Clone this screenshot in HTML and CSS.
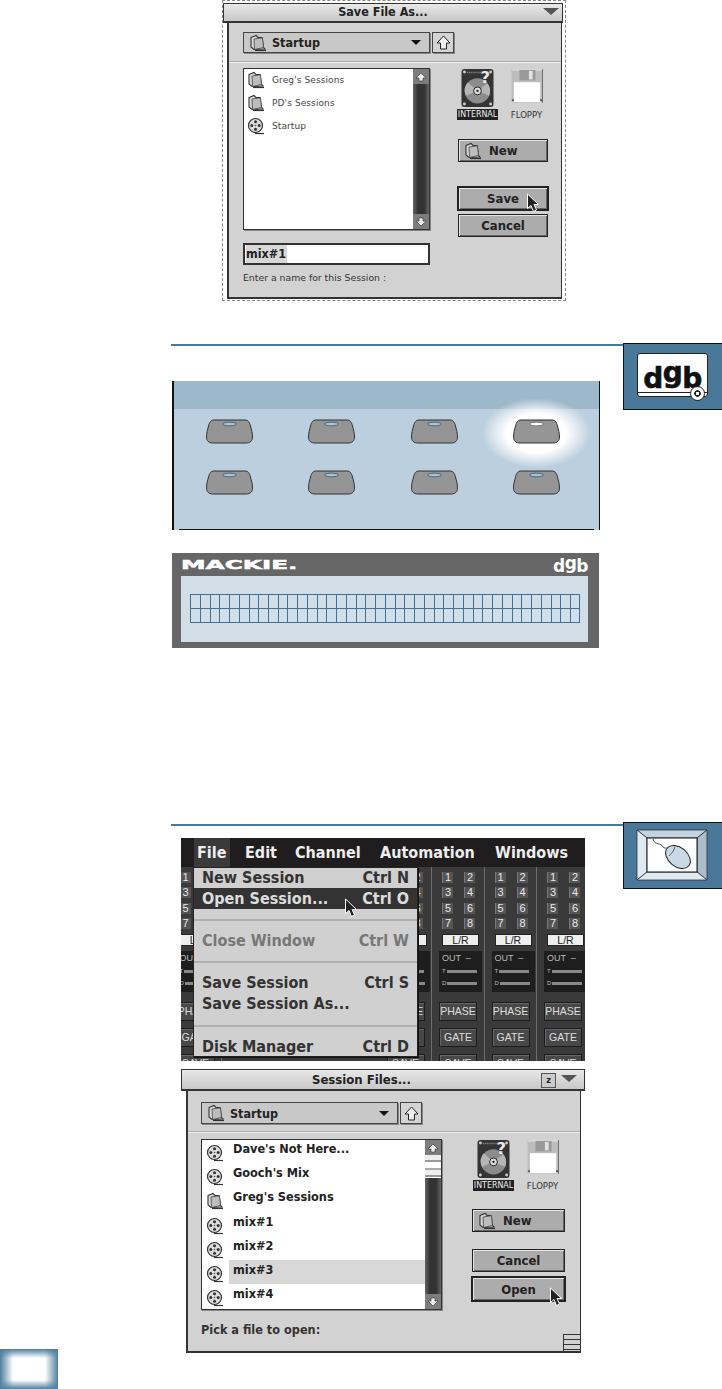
FILE: index.html
```html
<!DOCTYPE html>
<html lang="en">
<head>
  <meta charset="UTF-8">
  <title>Session Files</title>
  <link rel="stylesheet" href="styles.css">
</head>
<body>

  <svg class="defs" width="0" height="0">
    <symbol id="folder" viewBox="0 0 18 18">
      <path d="M2 3.5 L7 1.5 L9 3.500 L13 3.500 L14.500 13.500 L16 15 L5 15.500 L2 13 Z" fill="#d8d8d8" stroke="#333" stroke-width="1.1"/>
      <path d="M5 5 L13.500 3.800 L14.500 13.500 L5.500 15.500 Z" fill="#bdbdbd" stroke="#444" stroke-width=".8"/>
      <path d="M6 16.500 H17" stroke="#333" stroke-width="1.2"/>
    </symbol>
    <symbol id="reel" viewBox="0 0 18 18">
      <circle cx="8.500" cy="8.500" r="7" fill="#dcdcdc" stroke="#333" stroke-width="1.2"/>
      <circle cx="8.500" cy="4.800" r="1.500" fill="#333"/>
      <circle cx="8.500" cy="12.200" r="1.500" fill="#333"/>
      <circle cx="4.800" cy="8.500" r="1.500" fill="#333"/>
      <circle cx="12.200" cy="8.500" r="1.500" fill="#333"/>
      <circle cx="8.500" cy="8.500" r=".8" fill="#555"/>
      <path d="M8 16.500 H17" stroke="#333" stroke-width="1.2"/>
    </symbol>
    <symbol id="hd" viewBox="0 0 34 40">
      <rect x=".5" y=".5" width="33" height="39" rx="3" fill="#343434"/>
      <path d="M6 4 H24" stroke="#999" stroke-width="1.500" stroke-dasharray="1 1"/>
      <circle cx="17" cy="23" r="13" fill="#8c8c8c"/>
      <path d="M17 23 L7 14 A13 13 0 0 0 5 28 Z M17 23 L29 28 A13 13 0 0 0 27 15 Z" fill="#b5b5b5"/>
      <circle cx="17" cy="23" r="4" fill="#ddd" stroke="#222"/>
      <circle cx="17" cy="23" r="1.200" fill="#222"/>
      <text x="20" y="15" font-family="DejaVu Sans" font-weight="700" font-size="17" fill="#e8e8e8">?</text>
      <circle cx="3.500" cy="36.500" r="1.500" fill="#ccc"/>
      <circle cx="30.500" cy="36.500" r="1.500" fill="#ccc"/>
      <circle cx="3.500" cy="3.500" r="1.500" fill="#ccc"/>
      <circle cx="30.500" cy="3.500" r="1.500" fill="#ccc"/>
    </symbol>
    <symbol id="floppy" viewBox="0 0 34 36">
      <path d="M.5 .5 H33.500 V35.500 H.5 Z" fill="#bdbdbd"/>
      <path d="M1 1 H33" stroke="#e6e6e6"/>
      <rect x="9" y="1" width="17" height="11" fill="#9a9a9a"/>
      <rect x="19" y="2" width="4" height="9" fill="#e2e2e2"/>
      <rect x="3" y="14" width="28" height="21" fill="#fff"/>
      <path d="M33.500 0 V36" stroke="#666"/>
      <rect x="1" y="32" width="2" height="2" fill="#555"/>
      <rect x="31" y="32" width="2" height="2" fill="#555"/>
    </symbol>
    <symbol id="arrow" viewBox="0 0 14 20">
      <path d="M1.500 1 V15.500 L5 12.500 L7.500 18.500 L10.500 17 L8 11.500 H12.500 Z" fill="#222" stroke="#fff"/>
    </symbol>
    <symbol id="pad" viewBox="0 0 47 25">
      <path d="M8 1 H39 C42 1 43.500 3 44.500 7 C45.500 11 46.500 14 46.500 18 C46.500 22 44 24 40 24 H7 C3 24 .5 22 .5 18 C.5 14 1.500 11 2.500 7 C3.500 3 5 1 8 1 Z" fill="#959595" stroke="#333"/>
      <ellipse cx="23.500" cy="5" rx="7" ry="1.800" fill="#a9c3d6" stroke="#3a566b" stroke-width=".8"/>
    </symbol>
    <symbol id="pad-on" viewBox="0 0 47 25">
      <path d="M8 1 H39 C42 1 43.500 3 44.500 7 C45.500 11 46.500 14 46.500 18 C46.500 22 44 24 40 24 H7 C3 24 .5 22 .5 18 C.5 14 1.500 11 2.500 7 C3.500 3 5 1 8 1 Z" fill="#959595" stroke="#333"/>
      <ellipse cx="23.500" cy="5" rx="7" ry="1.800" fill="#fff" stroke="#444" stroke-width=".6"/>
    </symbol>
    <symbol id="up" viewBox="0 0 12 10">
      <path d="M6 1 L11 6 H8 V9 H4 V6 H1 Z" fill="#eee" stroke="#333" stroke-width=".6"/>
    </symbol>
  </svg>

  <div class="page">
    <div class="gutter"><div class="corner"></div></div>

    <div class="content">

      <div class="win win-save">
        <div class="win-title">Save File As...<span class="tri-wide"></span></div>
        <div class="win-body">
          <div class="pop-row">
            <div class="popup"><svg class="ico"><use href="#folder"/></svg><span class="popup-text">Startup</span><span class="tri"></span></div>
            <div class="upbtn"><svg width="15" height="17" viewBox="0 0 15 17"><path d="M7.500 2 L14 9 H10.500 V15 H4.500 V9 H1 Z" fill="#eee" stroke="#222"/></svg></div>
          </div>
          <div class="sep"></div>
          <div class="cols">
            <div class="main">
              <div class="list">
                <div class="rows">
                  <div class="row"><svg class="ico"><use href="#folder"/></svg>Greg's Sessions</div>
                  <div class="row"><svg class="ico"><use href="#folder"/></svg>PD's Sessions</div>
                  <div class="row"><svg class="ico"><use href="#reel"/></svg>Startup</div>
                </div>
                <div class="scroll">
                  <div class="scroll-btn"><svg width="12" height="10"><use href="#up"/></svg></div>
                  <div class="scroll-track"></div>
                  <div class="scroll-btn down"><svg width="12" height="10"><use href="#up"/></svg></div>
                </div>
              </div>
              <div class="namebox"><span class="name-sel">mix#1</span></div>
              <div class="hint">Enter a name for this Session :</div>
            </div>
            <div class="side">
              <div class="drives">
                <div class="drive"><svg class="drive-hd"><use href="#hd"/></svg><span class="drive-label on">INTERNAL</span></div>
                <div class="drive"><svg class="drive-fd"><use href="#floppy"/></svg><span class="drive-label">FLOPPY</span></div>
              </div>
              <div class="btn btn-new"><svg class="ico"><use href="#folder"/></svg>New</div>
              <div class="btn btn-def btn-first">Save<svg class="cursor"><use href="#arrow"/></svg></div>
              <div class="btn">Cancel</div>
            </div>
          </div>
        </div>
      </div>

      <div class="section section-pads">
        <div class="section-main">
          <div class="rule"></div>
          <div class="panel">
            <div class="panel-band"></div>
            <div class="pads">
              <svg class="pad"><use href="#pad"/></svg><svg class="pad"><use href="#pad"/></svg><svg class="pad"><use href="#pad"/></svg>
              <div class="pad-lit"><svg class="pad"><use href="#pad-on"/></svg></div>
              <svg class="pad"><use href="#pad"/></svg><svg class="pad"><use href="#pad"/></svg><svg class="pad"><use href="#pad"/></svg><svg class="pad"><use href="#pad"/></svg>
            </div>
            <div class="panel-foot"></div>
          </div>
          <div class="display">
            <div class="display-head"><span class="mackie">MACKIE.</span><span class="dgb dgb-small">d<span class="dgb-g">g</span>b</span></div>
            <div class="display-lcd"><div class="lcd-grid"></div></div>
          </div>
        </div>
        <div class="badge">
          <div class="card"><span class="dgb card-logo">d<span class="dgb-g">g</span>b</span><span class="card-stripe"></span><span class="card-disc"></span></div>
        </div>
      </div>

      <div class="section section-menu">
        <div class="section-main">
          <div class="rule"></div>
          <div class="shot">
            <div class="menubar">
              <span class="menubar-item on">File</span>
              <span class="menubar-item">Edit</span>
              <span class="menubar-item">Channel</span>
              <span class="menubar-item">Automation</span>
              <span class="menubar-item">Windows</span>
            </div>
            <div class="strips">
              <div class="strip">
                <div class="keys"><b>1</b><b>2</b><b>3</b><b>4</b><b>5</b><b>6</b><b>7</b><b>8</b></div>
                <div class="lr">L/R</div>
                <div class="out"><span>OUT &nbsp;&ndash;</span><i>T</i><i>D</i></div>
                <div class="chip chip-first">PHASE</div><div class="chip">GATE</div><div class="chip">SAVE</div>
              </div>
              <div class="strip-gap"></div>
              <div class="strip">
                <div class="keys"><b>1</b><b>2</b><b>3</b><b>4</b><b>5</b><b>6</b><b>7</b><b>8</b></div>
                <div class="lr">L/R</div>
                <div class="out"><span>OUT &nbsp;&ndash;</span><i>T</i><i>D</i></div>
                <div class="chip chip-first">PHASE</div><div class="chip">GATE</div><div class="chip">SAVE</div>
              </div>
              <div class="strip">
                <div class="keys"><b>1</b><b>2</b><b>3</b><b>4</b><b>5</b><b>6</b><b>7</b><b>8</b></div>
                <div class="lr">L/R</div>
                <div class="out"><span>OUT &nbsp;&ndash;</span><i>T</i><i>D</i></div>
                <div class="chip chip-first">PHASE</div><div class="chip">GATE</div><div class="chip">SAVE</div>
              </div>
              <div class="strip">
                <div class="keys"><b>1</b><b>2</b><b>3</b><b>4</b><b>5</b><b>6</b><b>7</b><b>8</b></div>
                <div class="lr">L/R</div>
                <div class="out"><span>OUT &nbsp;&ndash;</span><i>T</i><i>D</i></div>
                <div class="chip chip-first">PHASE</div><div class="chip">GATE</div><div class="chip">SAVE</div>
              </div>
              <div class="strip">
                <div class="keys"><b>1</b><b>2</b><b>3</b><b>4</b><b>5</b><b>6</b><b>7</b><b>8</b></div>
                <div class="lr">L/R</div>
                <div class="out"><span>OUT &nbsp;&ndash;</span><i>T</i><i>D</i></div>
                <div class="chip chip-first">PHASE</div><div class="chip">GATE</div><div class="chip">SAVE</div>
              </div>
            </div>
            <div class="menu">
              <div class="menu-item menu-first"><span>New Session</span><span>Ctrl N</span></div>
              <div class="menu-item on"><span>Open Session...</span><span>Ctrl O</span><svg class="cursor"><use href="#arrow"/></svg></div>
              <div class="menu-gap"></div>
              <div class="menu-item off"><span>Close Window</span><span>Ctrl W</span></div>
              <div class="menu-gap"></div>
              <div class="menu-item"><span>Save Session</span><span>Ctrl S</span></div>
              <div class="menu-item"><span>Save Session As...</span></div>
              <div class="menu-gap menu-gap-3"></div>
              <div class="menu-item"><span>Disk Manager</span><span>Ctrl D</span></div>
            </div>
          </div>

          <div class="win win-open">
            <div class="win-title">Session Files...<span class="zoombox">z</span><span class="tri-wide"></span></div>
            <div class="win-body">
              <div class="pop-row">
                <div class="popup"><svg class="ico"><use href="#folder"/></svg><span class="popup-text">Startup</span><span class="tri"></span></div>
                <div class="upbtn"><svg width="15" height="17" viewBox="0 0 15 17"><path d="M7.500 2 L14 9 H10.500 V15 H4.500 V9 H1 Z" fill="#eee" stroke="#222"/></svg></div>
              </div>
              <div class="sep"></div>
              <div class="cols">
                <div class="main">
                  <div class="list">
                    <div class="rows">
                      <div class="row"><svg class="ico"><use href="#reel"/></svg>Dave's Not Here...</div>
                      <div class="row"><svg class="ico"><use href="#reel"/></svg>Gooch's Mix</div>
                      <div class="row"><svg class="ico"><use href="#folder"/></svg>Greg's Sessions</div>
                      <div class="row"><svg class="ico"><use href="#reel"/></svg>mix#1</div>
                      <div class="row"><svg class="ico"><use href="#reel"/></svg>mix#2</div>
                      <div class="row"><svg class="ico"><use href="#reel"/></svg><span class="row-sel">mix#3</span></div>
                      <div class="row"><svg class="ico"><use href="#reel"/></svg>mix#4</div>
                    </div>
                    <div class="scroll">
                      <div class="scroll-btn"><svg width="12" height="10"><use href="#up"/></svg></div>
                      <div class="scroll-thumb"></div>
                      <div class="scroll-track"></div>
                      <div class="scroll-btn down"><svg width="12" height="10"><use href="#up"/></svg></div>
                    </div>
                  </div>
                  <div class="hint">Pick a file to open:</div>
                </div>
                <div class="side">
                  <div class="drives">
                    <div class="drive"><svg class="drive-hd"><use href="#hd"/></svg><span class="drive-label on">INTERNAL</span></div>
                    <div class="drive"><svg class="drive-fd"><use href="#floppy"/></svg><span class="drive-label">FLOPPY</span></div>
                  </div>
                  <div class="btn btn-new"><svg class="ico"><use href="#folder"/></svg>New</div>
                  <div class="btn btn-first">Cancel</div>
                  <div class="btn btn-def">Open<svg class="cursor"><use href="#arrow"/></svg></div>
                </div>
              </div>
              <div class="resize"></div>
            </div>
          </div>
        </div>
        <div class="badge">
          <svg width="99" height="66" viewBox="0 0 99 66">
            <path d="M14 8 H84 L74 16 H24 Z" fill="#c3d3df" stroke="#222" stroke-width=".7"/>
            <path d="M14 8 L24 16 V50 L14 58 Z" fill="#dfe9f0" stroke="#222" stroke-width=".7"/>
            <path d="M84 8 L74 16 V50 L84 58 Z" fill="#a9bdcc" stroke="#222" stroke-width=".7"/>
            <path d="M14 58 L24 50 H74 L84 58 Z" fill="#dfe9f0" stroke="#222" stroke-width=".7"/>
            <rect x="24" y="16" width="50" height="34" fill="#fff" stroke="#111"/>
            <path d="M30 17 C32 24 38 20 40 25 C41 27 44 25 46 27" fill="none" stroke="#222" stroke-width=".8"/>
            <ellipse cx="55" cy="35" rx="14" ry="9.500" transform="rotate(40 55 35)" fill="#c9d9e6" stroke="#222"/>
            <path d="M46 34 C50 30 51 28 52 24.500" fill="none" stroke="#222" stroke-width=".7"/>
          </svg>
        </div>
      </div>

    </div>
  </div>

</body>
</html>
```

FILE: styles.css
```css
html, body {
  margin: 0;
  padding: 0;
  background: #fff;
}
.defs {
  display: block;
  height: 0;
}
.page {
  display: flex;
  height: 1389px;
  overflow: hidden;
  font-family: "DejaVu Sans", sans-serif;
}
.gutter {
  width: 171px;
  flex: none;
  display: flex;
  align-items: flex-end;
}
.corner {
  width: 58px;
  height: 40px;
  background:
    linear-gradient(90deg, #4f7f9f, rgba(79, 127, 159, 0) 13px, rgba(79, 127, 159, 0) 45px, #4f7f9f),
    linear-gradient(#4f7f9f, rgba(79, 127, 159, 0) 9px, rgba(79, 127, 159, 0) 31px, #4f7f9f),
    #fff;
}
.content {
  width: 551px;
  flex: none;
}

/* mac dialogs */
.win {
  box-sizing: border-box;
  display: flex;
  flex-direction: column;
}
.win-save {
  width: 344px;
  height: 301px;
  margin-left: 51px;
  border: 1px dashed #888;
}
.win-open {
  width: 404px;
  height: 289px;
  margin: 8px 0 0 10px;
}
.win-title {
  box-sizing: border-box;
  position: relative;
  height: 20px;
  margin: 2px 2px 0 0;
  padding-right: 20px;
  background: linear-gradient(#e8e8e8, #c8c8c8);
  border: 1px solid #333;
  border-bottom-width: 2px;
  font-family: "DejaVu Sans Condensed", "DejaVu Sans", sans-serif;
  font-size: 12.500px;
  font-weight: 700;
  line-height: 16px;
  text-align: center;
  color: #222;
}
.win-open .win-title {
  height: 22px;
  margin: 0;
  line-height: 19px;
  font-size: 13px;
  padding-right: 43px;
}
.tri-wide {
  position: absolute;
  right: 3px;
  top: 4px;
  width: 0;
  height: 0;
  border: 8px solid transparent;
  border-top: 7px solid #555;
  border-bottom: 0;
}
.win-open .tri-wide {
  right: 7px;
  top: 5px;
}
.zoombox {
  position: absolute;
  right: 28px;
  top: 3px;
  width: 13px;
  height: 13px;
  border: 1px solid #555;
  background: #ccc;
  font-size: 9px;
  line-height: 13px;
}
.win-body {
  position: relative;
  flex: 1;
  display: flex;
  flex-direction: column;
  margin: 0 3px 1px 4px;
  background: #d2d2d2;
  border: 1px solid #333;
  border-width: 0 1px 2px 2px;
}
.win-open .win-body {
  margin: 0 4px 5px 5px;
}
.pop-row {
  display: flex;
  gap: 2px;
  padding: 9px 0 0 14px;
}
.win-open .pop-row {
  padding: 11px 0 0 13px;
}
.popup {
  box-sizing: border-box;
  display: flex;
  align-items: center;
  width: 187px;
  height: 21px;
  padding: 0 8px 0 5px;
  background-color: #c8c8c8;
  background-image: radial-gradient(#b4b4b4 .6px, transparent .7px);
  background-size: 2px 2px;
  border: 1px solid #444;
  box-shadow: 1px 1px #888;
  font-family: "DejaVu Sans Condensed", "DejaVu Sans", sans-serif;
  font-size: 12.500px;
  font-weight: 700;
  color: #222;
}
.win-open .popup {
  width: 197px;
  height: 22px;
}
.popup-text {
  flex: 1;
  margin-left: 5px;
}
.ico {
  width: 18px;
  height: 18px;
  flex: none;
}
.tri {
  width: 0;
  height: 0;
  border: 5px solid transparent;
  border-top: 5px solid #111;
  border-bottom: 0;
}
.upbtn {
  box-sizing: border-box;
  width: 22px;
  height: 21px;
  display: flex;
  align-items: center;
  justify-content: center;
  background: #d4d4d4;
  border: 1px solid #444;
  box-shadow: 1px 1px #888;
}
.win-open .upbtn {
  height: 22px;
}
.sep {
  height: 1px;
  margin-top: 8px;
  background: #f0f0f0;
  border-top: 1px solid #aaa;
}
.win-open .sep {
  margin-top: 7px;
}
.cols {
  display: flex;
  padding: 5px 0 0 14px;
}
.win-open .cols {
  padding: 6px 0 0 13px;
}
.main {
  width: 215px;
  flex: none;
}
.win-save .main {
  width: 187px;
}
.win-open .main {
  width: 241px;
}
.list {
  box-sizing: border-box;
  display: flex;
  height: 162px;
  background: #fff;
  border: 1px solid #333;
  box-shadow: 1px 1px #888;
}
.win-open .list {
  height: 171px;
}
.rows {
  flex: 1;
  margin-top: -1px;
  padding-left: 3px;
  font-size: 9px;
  color: #444;
  letter-spacing: .1px;
}
.win-open .rows {
  margin-top: 0;
  padding: 1px 0 0 4px;
  font-family: "DejaVu Sans Condensed", "DejaVu Sans", sans-serif;
  font-size: 12.600px;
  font-weight: 700;
  color: #222;
  letter-spacing: 0;
}
.row {
  display: flex;
  align-items: center;
  gap: 7px;
  height: 23px;
}
.win-open .row {
  align-items: flex-start;
  height: 24.200px;
  gap: 9px;
  line-height: 16px;
}
.win-open .row .ico {
  margin-top: 3px;
}
.row-sel {
  flex: 1;
  height: 22px;
  margin: -2px 0 0 -4px;
  padding: 2px 0 0 4px;
  background: #d8d8d8;
}
.scroll {
  width: 16px;
  flex: none;
  display: flex;
  flex-direction: column;
  background: #444;
}
.scroll-btn {
  height: 15px;
  display: flex;
  align-items: center;
  justify-content: center;
  background: #7d7d7d;
}
.scroll-btn.down svg {
  transform: scaleY(-1);
}
.scroll-thumb {
  height: 23px;
  background: repeating-linear-gradient(#eee 0 5px, #999 5px 7px, #fff 7px 13px, #aaa 13px 15px);
}
.scroll-track {
  flex: 1;
  background: linear-gradient(90deg, #666, #333 30%, #333 70%, #666);
}
.namebox {
  box-sizing: border-box;
  height: 22px;
  margin-top: 13px;
  padding-left: 1px;
  background: #fff;
  border: 2px solid #333;
  font-family: "DejaVu Sans Condensed", "DejaVu Sans", sans-serif;
  font-size: 12.500px;
  font-weight: 700;
  line-height: 18px;
  color: #222;
}
.name-sel {
  display: inline-block;
  padding-right: 1px;
  background: #d8d8d8;
}
.hint {
  margin-top: 7px;
  font-size: 9.300px;
  line-height: 12px;
  color: #333;
  white-space: nowrap;
}
.win-open .hint {
  margin-top: 13px;
  font-family: "DejaVu Sans Condensed", "DejaVu Sans", sans-serif;
  font-size: 12.600px;
  font-weight: 700;
  line-height: 14px;
}
.resize {
  position: absolute;
  right: 0;
  bottom: 0;
  box-sizing: border-box;
  width: 17px;
  height: 17px;
  background: repeating-linear-gradient(#d2d2d2 0 4px, #333 4px 5px);
  border: 1px solid #333;
  border-width: 1px 0 0 1px;
}
.side {
  width: 90px;
  margin-left: 28px;
  flex: none;
}
.win-open .side {
  width: 93px;
  margin-left: 30px;
}
.drives {
  display: flex;
  gap: 10px;
  height: 71px;
}
.win-open .drives {
  height: 70px;
  padding-left: 2px;
  gap: 10px;
}
.drive {
  display: flex;
  flex-direction: column;
  align-items: center;
  width: 39px;
}
.drive-hd {
  width: 33px;
  height: 40px;
  flex: none;
}
.drive-fd {
  width: 32px;
  height: 36px;
  flex: none;
  margin-bottom: 4px;
}
.drive-label {
  margin-top: 1px;
  padding: 0 1px;
  font-family: "DejaVu Sans Condensed", "DejaVu Sans", sans-serif;
  font-size: 9.500px;
  line-height: 11px;
  color: #333;
}
.drive-label.on {
  background: #222;
  color: #eee;
  font-size: 8.800px;
}
.btn {
  box-sizing: border-box;
  position: relative;
  display: flex;
  align-items: center;
  justify-content: center;
  gap: 7px;
  height: 23px;
  background: #acacac;
  border: 1px solid #222;
  box-shadow: inset 1px 1px #e4e4e4, inset -1px -1px #666;
  font-family: "DejaVu Sans Condensed", "DejaVu Sans", sans-serif;
  font-size: 13px;
  font-weight: 700;
  color: #222;
}
.btn-new {
  justify-content: flex-start;
  padding-left: 5px;
  margin-bottom: 25px;
}
.btn-def {
  height: 25px;
  margin: -1px -1px 3px;
  border-width: 2px;
}
.win-open .btn-new {
  margin-bottom: 17px;
}
.win-open .btn-first {
  margin-bottom: 4px;
}
.win-open .btn-def {
  height: 26px;
  margin: 0 -1px;
}
.cursor {
  position: absolute;
  right: 7px;
  bottom: -4px;
  width: 14px;
  height: 20px;
}
.win-open .cursor {
  right: 1px;
  bottom: -7px;
}

/* figures */
.section {
  display: flex;
}
.section-main {
  width: 452px;
  flex: none;
}
.section-pads {
  margin-top: 42px;
}
.section-menu {
  margin-top: 174px;
}
.rule {
  height: 2px;
  background: #4a7898;
}
.section-pads .rule {
  margin-top: 1px;
}
.section-menu .rule {
  margin-top: 2px;
}
.badge {
  box-sizing: border-box;
  width: 99px;
  height: 67px;
  flex: none;
  background: #4a7898;
  border: 1px solid #111;
  border-right: 0;
  overflow: hidden;
}
.badge svg {
  display: block;
  margin: -1px 0 0 -1px;
}
.dgb {
  font-weight: 700;
  white-space: nowrap;
}
.dgb-g {
  vertical-align: .2em;
}
.card {
  position: relative;
  box-sizing: border-box;
  width: 71px;
  height: 44px;
  margin: 9px 0 0 13px;
  background: #fff;
  border: 1px solid #222;
  border-radius: 3px;
  text-align: center;
}
.card-logo {
  display: block;
  padding-top: 4px;
  font-size: 28px;
  line-height: 30px;
  letter-spacing: -.5px;
  color: #111;
  -webkit-text-stroke: .6px #111;
}
.card-stripe {
  position: absolute;
  left: 0;
  right: 0;
  bottom: 3px;
  height: 1px;
  background: #222;
}
.card-disc {
  position: absolute;
  right: 2px;
  bottom: -5px;
  width: 13px;
  height: 13px;
  background: radial-gradient(circle, #fff 1.500px, #222 2px, #222 3px, #fff 3.500px);
  border-radius: 50%;
  border: 1px solid #222;
}
.panel {
  position: relative;
  box-sizing: border-box;
  display: flex;
  flex-direction: column;
  width: 428px;
  height: 149px;
  margin: 35px 0 0 1px;
  background: #bccfde;
  border-left: 2px solid #111;
  border-right: 1px solid #111;
}
.panel-band {
  height: 28px;
  background: #9db8cb;
}
.pads {
  flex: 1;
  display: grid;
  grid-template-columns: repeat(4, 102.400px);
  grid-auto-rows: 25px;
  row-gap: 26px;
  padding: 10px 0 0 32px;
}
.pad {
  display: block;
  width: 47px;
  height: 25px;
}
.pad-lit {
  position: relative;
}
.pad-lit::before {
  content: "";
  position: absolute;
  left: -31px;
  top: -21px;
  width: 109px;
  height: 70px;
  background: radial-gradient(closest-side, #fff 55%, rgba(255, 255, 255, 0));
}
.pad-lit .pad {
  position: relative;
}
.panel-foot {
  height: 1px;
  margin: 0 5px;
  background: #111;
}
.display {
  box-sizing: border-box;
  width: 427px;
  height: 95px;
  margin: 23px 0 0 1px;
  padding: 0 11px 6px 9px;
  background: #666;
  display: flex;
  flex-direction: column;
}
.display-head {
  height: 23px;
  display: flex;
  justify-content: space-between;
  align-items: center;
  color: #fff;
  font-weight: 700;
}
.mackie {
  font-size: 13px;
  line-height: 11px;
  display: block;
  margin-top: -1px;
  transform: scaleX(1.900);
  transform-origin: left center;
  -webkit-text-stroke: .5px #fff;
}
.dgb-small {
  font-size: 17px;
  line-height: 20px;
  letter-spacing: -.5px;
}
.display-lcd {
  flex: 1;
  background: #d1dde7;
  padding: 18px 8px 0 9px;
}
.lcd-grid {
  box-sizing: border-box;
  height: 29px;
  border: 1px solid #3f7096;
  background-image:
    linear-gradient(#3f7096, #3f7096),
    repeating-linear-gradient(90deg, transparent 0 8.750px, #3f7096 8.750px 9.750px);
  background-size: 100% 1px, 100% 100%;
  background-position: 0 13px, 0 0;
  background-repeat: no-repeat;
}

/* mixer screenshot */
.shot {
  position: relative;
  width: 404px;
  height: 223px;
  margin: 12px 0 0 10px;
  background: #3b3a3a;
  overflow: hidden;
  color: #ddd;
}
.menubar {
  display: grid;
  grid-template-columns: 48px 50px 85px 115px auto;
  height: 29px;
  padding-left: 13px;
  background: #1f1d1d;
  font-family: "DejaVu Sans Condensed", "DejaVu Sans", sans-serif;
  font-size: 16px;
  font-weight: 700;
  line-height: 30px;
  color: #eee;
}
.menubar-item {
  padding-left: 3px;
  white-space: nowrap;
}
.menubar-item.on {
  width: 33px;
  background: #3b3a3a;
}
.strips {
  display: flex;
  margin-left: -11.500px;
}
.strip {
  box-sizing: border-box;
  width: 52.500px;
  height: 194px;
  flex: none;
  padding: 5px 0 0 10px;
  border-right: 1px solid #6e6d6d;
}
.strip-gap {
  width: 157.500px;
  flex: none;
}
.keys {
  display: grid;
  grid-template-columns: 11px 11px;
  grid-auto-rows: 11px;
  gap: 4.400px 11px;
}
.keys b {
  background: #565555;
  border-left: 1px solid #777;
  font-family: "Liberation Sans", sans-serif;
  font-size: 11px;
  font-weight: 400;
  line-height: 11px;
  text-align: center;
  color: #e8e8e8;
}
.lr {
  box-sizing: border-box;
  width: 37px;
  height: 12px;
  margin: 5px 0 0 0;
  background: #eee;
  border: 1px solid #222;
  font-family: "Liberation Sans", sans-serif;
  font-size: 10.500px;
  line-height: 10px;
  text-align: center;
  color: #222;
}
.out {
  box-sizing: border-box;
  width: 43px;
  height: 41px;
  margin: 5px 0 0 -3px;
  padding: 2px 0 0 3px;
  background: #1f1e1e;
  font-family: "Liberation Sans", sans-serif;
  font-size: 9px;
  line-height: 11px;
  color: #bbb;
}
.out span {
  display: block;
}
.out i {
  display: flex;
  align-items: center;
  gap: 1px;
  margin-top: 2px;
  font-size: 6px;
  font-style: normal;
  line-height: 10px;
}
.out i::after {
  content: "";
  width: 30px;
  height: 3px;
  background: #888;
}
.chip {
  box-sizing: border-box;
  width: 38px;
  height: 19px;
  margin: 7px 0 0 -3px;
  background: #494848;
  border: 1px solid #1c1c1c;
  box-shadow: inset 1px 1px #666;
  font-family: "Liberation Sans", sans-serif;
  font-size: 10.500px;
  line-height: 17px;
  text-align: center;
  color: #ddd;
}
.chip-first {
  margin-top: 10px;
}
.menu {
  position: absolute;
  left: 12px;
  top: 29px;
  box-sizing: border-box;
  width: 225px;
  height: 190px;
  padding: 0 8px;
  background: #d0d0d0;
  border: 1px solid #222;
  box-shadow: 1px 1px #111;
  font-family: "DejaVu Sans Condensed", "DejaVu Sans", sans-serif;
  font-size: 16px;
  font-weight: 700;
  color: #333;
}
.menu-item {
  position: relative;
  display: flex;
  justify-content: space-between;
  height: 21px;
  line-height: 21px;
  white-space: nowrap;
}
.menu-first {
  height: 20px;
  line-height: 19px;
}
.menu-item.on {
  margin: 0 -8px;
  padding: 0 8px;
  background: #333;
  color: #ddd;
}
.menu-item.off {
  color: #777;
}
.menu-item .cursor {
  left: 150px;
  top: 10px;
}
.menu-gap {
  height: 10px;
  margin: 0 -8px 9px;
  border-bottom: 2px solid #b0b0b0;
}
.menu-gap-3 {
  height: 11px;
}
```
